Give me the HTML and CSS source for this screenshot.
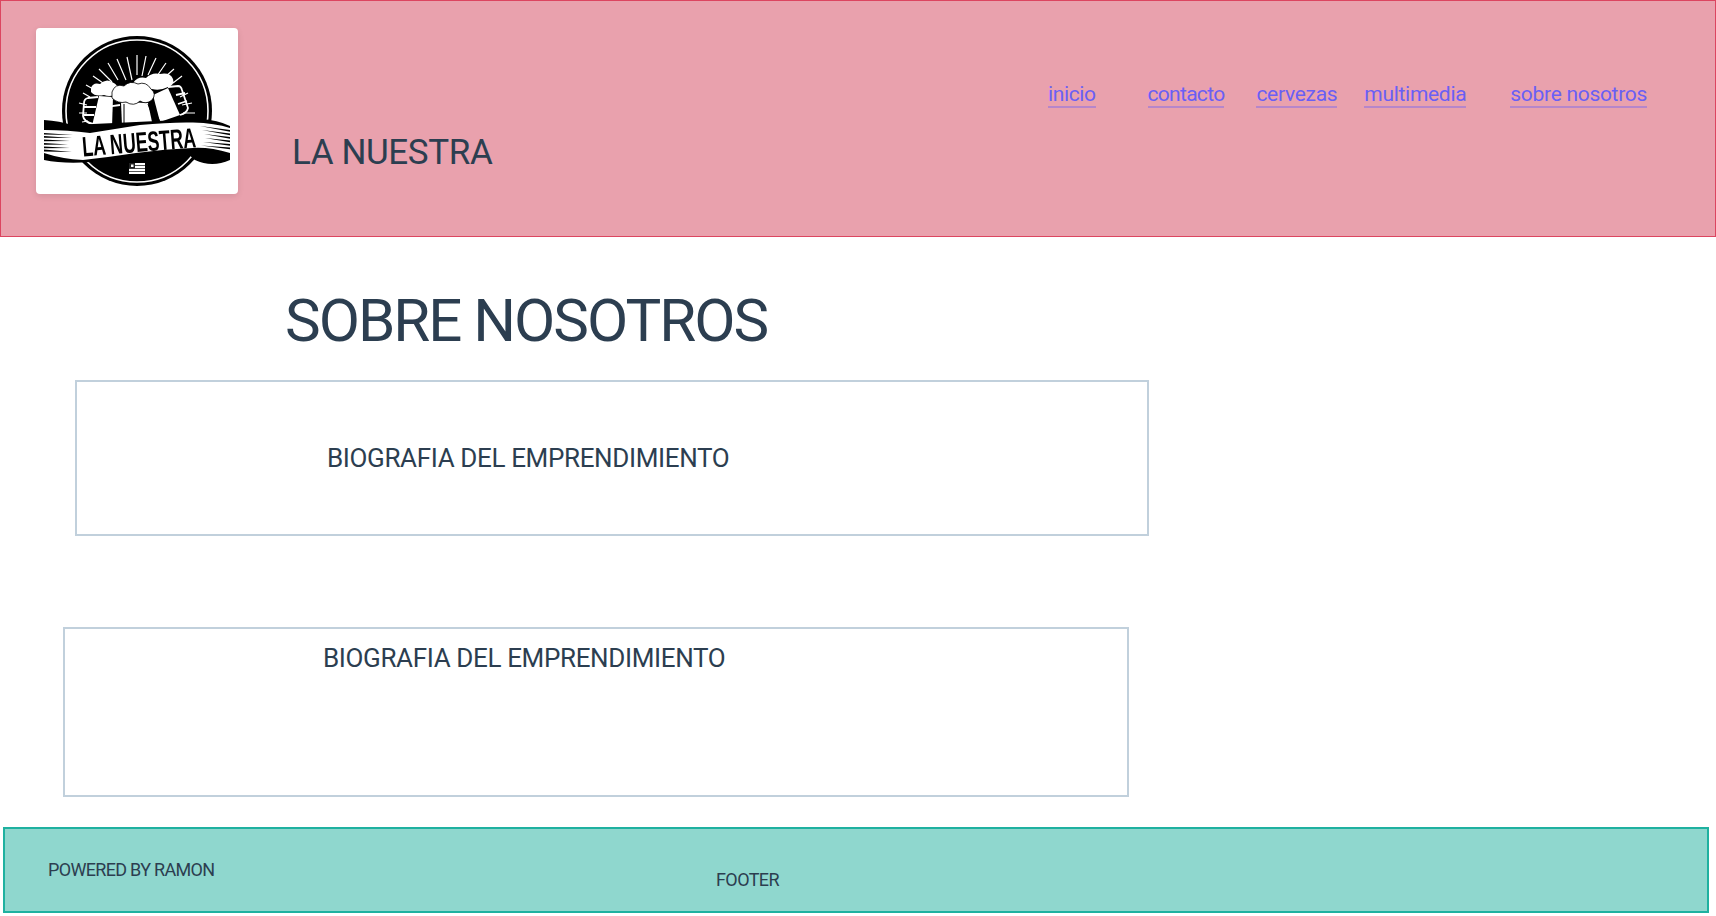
FILE: index.html
```html
<!DOCTYPE html>
<html lang="es">
<head>
<meta charset="utf-8">
<title>La Nuestra</title>
<link rel="stylesheet" href="styles.css">
</head>
<body>
<header class="site-header">
  <div class="brand">
    <div class="logo-card">
      <svg class="logo" viewBox="36 28 202 166" role="img" aria-label="La Nuestra">
        <circle cx="137" cy="111" r="75" fill="#000"/>
        <circle cx="137" cy="111" r="71" fill="none" stroke="#fff" stroke-width="1.6"/>
        <g fill="none" stroke="#fff" stroke-width="1.2">
          <path d="M137 55V75M127 57L132 80M117 59L126 80M108 63L118 80M99 69L112 82M93 76L103 83"/>
          <path d="M146 56L142 76M156 58L148 75M166 63L157 76M174 69L165 77M182 76L173 83"/>
          <path d="M188 93L180 97M192 103L182 105M195 113L183 113"/>
          <path d="M86 85L95 90M83 93L90 97M79 103L87 105M79 113L87 113M82 122L88 121"/>
        </g>
        <g fill="#fff">
          <polygon points="99,96 113,97 112,127 92,126"/>
          <polygon points="121,102 148,103 152,122 122,126"/>
          <polygon points="153,95 168,88 180,115 160,122"/>
        </g>
        <g fill="none" stroke="#fff" stroke-width="1.8">
          <path d="M98 97L88 98Q84 99 84 103L83 116Q84 122 93 124M84 107L96 107M84 115L94 115"/>
          <path d="M120 105L112 106Q110 107 110 111L110 125"/>
          <path d="M168 87L178 86Q181 86 182 90L188 108Q187 113 180 115M176 95L185 93M178 104L187 101"/>
        </g>
        <g fill="none" stroke="#000" stroke-width="1">
          <path d="M124 104L124 126M115 109L115 125M148 104L155 123M153 106L160 122"/>
        </g>
        <g fill="#fff">
          <path d="M91 88Q93 82 100 84Q106 78 112 82Q119 85 119 92Q112 98 104 95Q95 97 91 92Z"/>
          <path d="M133 83Q138 76 146 78Q152 72 160 74Q170 72 173 79Q175 85 168 87Q160 91 152 89Q144 92 138 88Z"/>
        </g>
        <path d="M112 92Q115 83 124 86Q130 80 138 84Q146 81 151 89Q157 94 152 100Q146 105 140 101Q134 107 126 102Q118 104 112 98Z" fill="#fff" stroke="#000" stroke-width=".8"/>
        <path d="M44 120Q60 121 72 125L200 119Q218 120 230 126V160Q212 168 195 160L188 154L90 162Q64 164 44 160Z" fill="#000"/>
        <path class="ribbon-face" d="M44 130Q68 130 90 133Q115 129 140 125Q170 122 193 122.500Q215 123 230 128V153Q210 147 193 148Q165 149 136 153Q110 157 83 160Q62 159 44 153Z" fill="#fff"/>
        <g fill="#000">
          <polygon points="44,133 73,135 44,134.500"/>
          <polygon points="44,136 72,138 44,137.800"/>
          <polygon points="44,139.500 70,141 44,141.300"/>
          <polygon points="44,143 68,144.500 44,144.800"/>
          <polygon points="44,146.500 70,148 44,148.300"/>
          <polygon points="44,149.500 72,152 44,151.500"/>
          <polygon points="230,130 200,126 230,131.800"/>
          <polygon points="230,133.500 202,130 230,135.300"/>
          <polygon points="230,137 204,134 230,138.800"/>
          <polygon points="230,140.500 205,138 230,142.300"/>
          <polygon points="230,144 203,142 230,145.800"/>
          <polygon points="230,147.500 201,145.500 230,149.300"/>
        </g>
        <text class="logo-text" transform="translate(83 156.500) rotate(-4.700) scale(.635 1)">LA NUESTRA</text>
        <g class="flag">
          <rect x="129" y="163" width="16" height="11" fill="#fff"/>
          <path d="M129 165.500H145M129 168.500H145M129 171.500H145" stroke="#555" stroke-width="1.200"/>
          <rect x="129" y="163" width="6" height="5.500" fill="#222"/>
          <rect x="131" y="164.500" width="2.500" height="2.500" fill="#fff"/>
        </g>
      </svg>
    </div>
    <h2 class="brand-name">LA NUESTRA</h2>
  </div>
  <nav class="main-nav">
    <a class="nav-link nav-inicio" href="#">inicio</a>
    <a class="nav-link nav-contacto" href="#">contacto</a>
    <a class="nav-link nav-cervezas" href="#">cervezas</a>
    <a class="nav-link nav-multimedia" href="#">multimedia</a>
    <a class="nav-link nav-sobre" href="#">sobre nosotros</a>
  </nav>
</header>
<main>
  <h1 class="page-title">SOBRE NOSOTROS</h1>
  <section class="bio bio-one"><h3 class="bio-title">BIOGRAFIA DEL EMPRENDIMIENTO</h3></section>
  <section class="bio bio-two"><h3 class="bio-title">BIOGRAFIA DEL EMPRENDIMIENTO</h3></section>
</main>
<footer class="site-footer">
  <p class="powered">POWERED BY RAMON</p>
  <p class="footer-label">FOOTER</p>
</footer>
</body>
</html>
```
FILE: styles.css
```css
* { box-sizing: border-box; }
html, body { margin: 0; padding: 0; }
body { background: #fff; color: #2c3e50; font-family: "Roboto", "Liberation Sans", sans-serif; height: 916px; overflow: hidden; }
h1, h2, h3, p { margin: 0; font-weight: 400; }
.site-header { display: flex; justify-content: space-between; height: 237px; background: #e9a1ad; border: 1px solid #dc4560; padding: 27px 0 0 35px; }
.brand { display: flex; align-items: flex-start; }
.logo-card { width: 202px; height: 166px; background: #fff; border-radius: 4px; box-shadow: 0 2px 6px rgba(0,0,0,.1); }
.logo { display: block; width: 202px; height: 166px; filter: blur(.35px); }
.logo-text { font-family: "Liberation Sans Narrow", "Liberation Sans", sans-serif; font-weight: 700; font-size: 28px; fill: #000; }
.brand-name { font-size: 35px; line-height: 40px; letter-spacing: -.4px; margin: 105px 0 0 54px; }
.main-nav { display: flex; align-items: flex-start; padding: 54px 68px 0 0; font-size: 21px; letter-spacing: -.3px; }
.nav-link { color: #6a5ff5; text-decoration: none; border-bottom: 2px solid rgba(106,95,245,.4); line-height: 24px; }
.nav-inicio { letter-spacing: -.4px; }
.nav-contacto { margin-left: 52px; letter-spacing: -.7px; }
.nav-cervezas { margin-left: 32px; }
.nav-multimedia { margin-left: 27px; }
.nav-sobre { margin-left: 44px; }
.page-title { font-size: 60px; line-height: 70px; letter-spacing: -2px; margin: 49px 0 0 285px; }
.bio { border: 2px solid #c1d0dc; }
.bio-title { font-size: 26px; line-height: 30px; letter-spacing: -.36px; }
.bio-one { width: 1074px; height: 156px; margin: 24px 0 0 75px; padding: 61px 0 0 250px; }
.bio-two { width: 1066px; height: 170px; margin: 91px 0 0 63px; padding: 14px 0 0 258px; }
.site-footer { position: relative; width: 1706px; height: 86px; margin: 30px 0 0 3px; background: #8fd7ce; border: 2px solid #1eb1a0; }
.powered { font-size: 18px; line-height: 22px; letter-spacing: -.68px; padding: 30px 0 0 43px; }
.footer-label { position: absolute; left: 711px; top: 40px; font-size: 18px; line-height: 22px; letter-spacing: -.6px; }
```
